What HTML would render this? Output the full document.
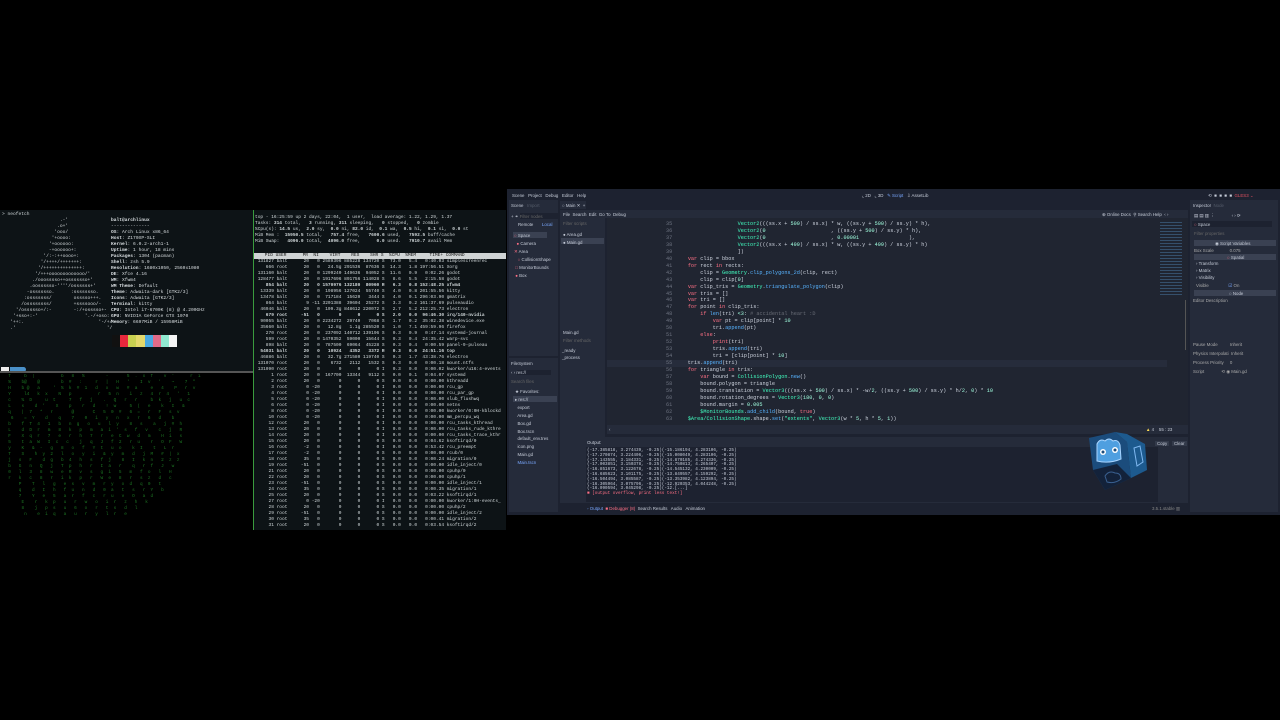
<!DOCTYPE html>
<html><head><meta charset="utf-8"><style>
*{margin:0;padding:0;box-sizing:border-box}
body{width:1280px;height:720px;background:#000;position:relative;overflow:hidden;font-family:"Liberation Sans",sans-serif}
.a{position:absolute}
.m{font-family:"Liberation Mono",monospace;white-space:pre}
.t{font-size:4.6px;line-height:6px;color:#cfd6d8}
.g{color:#2fbf3a}
.gs{font-size:4.4px;color:#c6ccd8;white-space:nowrap}
.code{font-size:5.2px;line-height:6.95px;color:#cdd3de}
.kw{color:#ff7085}.ty{color:#42ffc2}.fn{color:#57b3ff}.nu{color:#a1ffe0}.cm{color:#676b75}.ln{color:#6d7380}
.hb{background:#cfd3d4;color:#111}
.b{font-weight:bold}
</style></head><body>

<!-- left terminal -->
<div class="a" style="left:0;top:210px;width:253px;height:157px;background:#0d1316"></div>
<div class="a m t" style="left:2px;top:212px">&gt; neofetch</div>
<div class="a m t" style="left:2px;top:218px;color:#d8dde0">                     .-'
                    .o+'
                   'ooo/
                  '+oooo:
                 '+oooooo:
                 -+oooooo+:
               '/:-:++oooo+:
              '/++++/+++++++:
             '/++++++++++++++:
            '/+++ooooooooooooo/'
           ./ooosssso++osssssso+'
          .oossssso-''''/ossssss+'
         -osssssso.      :ssssssso.
        :osssssss/        osssso+++.
       /ossssssss/        +ssssooo/-
     '/ossssso+/:-        -:/+osssso+-
    '+sso+:-'                 '.-/+oso:
   '++:.                           '-/+/
   .'                                 '/</div>
<div class="a m t" style="left:111px;top:218px;color:#d8dde0"><b>balt@archlinux</b>
--------------
<b>OS</b>: Arch Linux x86_64
<b>Host</b>: Z170XP-SLI
<b>Kernel</b>: 6.0.2-arch1-1
<b>Uptime</b>: 1 hour, 18 mins
<b>Packages</b>: 1304 (pacman)
<b>Shell</b>: zsh 5.9
<b>Resolution</b>: 1680x1050, 2560x1080
<b>DE</b>: Xfce 4.16
<b>WM</b>: Xfwm4
<b>WM Theme</b>: Default
<b>Theme</b>: Adwaita-dark [GTK2/3]
<b>Icons</b>: Adwaita [GTK2/3]
<b>Terminal</b>: kitty
<b>CPU</b>: Intel i7-6700K (8) @ 4.200GHz
<b>GPU</b>: NVIDIA GeForce GTX 1070
<b>Memory</b>: 6697MiB / 15950MiB</div>
<div class="a" style="left:112px;top:335px;width:65px;height:12px;display:flex">
<div style="flex:1;background:#111"></div><div style="flex:1;background:#e8283c"></div><div style="flex:1;background:#c8d050"></div><div style="flex:1;background:#e4d86a"></div><div style="flex:1;background:#4aa8e0"></div><div style="flex:1;background:#e06a88"></div><div style="flex:1;background:#90e8d0"></div><div style="flex:1;background:#f4f4f4"></div></div>
<div class="a" style="left:0;top:367px;width:253px;height:4px;background:#0d1316"></div>
<div class="a" style="left:1px;top:367px;width:8px;height:5px;background:#eee"></div>
<div class="a" style="left:10px;top:367px;width:16px;height:5px;background:#4a90c8;border-radius:0 3px 3px 0"></div>
<div class="a" style="left:0;top:371px;width:253px;height:2px;background:#555"></div>
<!-- matrix -->
<div class="a m t g" style="left:3px;top:374px;font-size:4.4px;line-height:6px;opacity:.6">  f     b  |          b   8   %        -       5  .  x  f    v  '      r  i
  %    b@    @        b  #   :     r   |   H   '    I  v   '    ~    7  "
  H    b @   a     '  %  k  #  1   d   x   w   #  a     e   4    P   r  v
  Y     l4   k  x    N   p          r   5  n    i   z   4  r  4   '   1
  c    %  D     u  t     7   f   j    .   Q   r   r     b  k   j   u  c
  L    s    d  '    X    p    r   d    !  w     5  (   e    k   I   &amp;
  q    |  7   *   r       @       C   5  0  #   6  =   r   F   s  v
   6    =  Y    d    q    7    0   i   y   n   x   r   6   d    b
  b    f  T  4   1   b   n  g   o   u   l  y    8   s    a   j  #  h
  L    d  D  r   m   8   k   p   m   a  i  '  s   f   v    c   j   R
  F    X  q  r   7   e   r   h   7   r   e  C  w   d   m    H  i   s
  5    t  a  W   I  c   c    j   q   J   f  2   r  u    r   O  F   W
  y    K   &amp;  -   g   8   o   f   Y  t   u  o    k  I    t   L  r
  T    S    h  y  2   l   o   y   i   &amp;  y   m   d   j  M   #  |  x
  j   s   F    d  g   b  4   h   s   f  j    8   I   k  n   2  z  z
  b   G   n   Q   j   T  p   h   r   I  a   r    q   r  f   J   w
  0   l   3   8   w   e  R   v   s   g  i   5   m   f  o   l   H
  r   k   c   8   r   i  k   p   r   W  e   8   r   s  z   d   c
      P    T   l   g   e  s   v   m   r  y   o  d   q  0   t
      q    d   I   h   f  u   n   d   0  a   t   s   r  Y   b
      7    Y   e   5   a  r   f   c   r  u   v   O   a  d
       E    r   k  p   u   r   w   o   i  r   z   h   k
       8    j   p  s   u   6   o   r   t  s   d   l
        n    e  i  q   a   u   r   y   l  r   e</div>
<div class="a" style="left:253px;top:210px;width:1px;height:320px;background:#3a9b3e"></div>

<!-- htop -->
<div class="a" style="left:254px;top:210px;width:252px;height:320px;background:#0d1316"></div>
<div class="a m t" style="left:255px;top:215px;font-size:4.5px">top - 16:25:59 up 2 days, 22:04,  1 user,  load average: 1.22, 1.29, 1.37
Tasks: <b>314</b> total,   <b>3</b> running, <b>311</b> sleeping,   <b>0</b> stopped,   <b>0</b> zombie
%Cpu(s): <b>14.5</b> us,  <b>2.0</b> sy,  <b>0.0</b> ni, <b>82.0</b> id,  <b>0.1</b> wa,  <b>0.5</b> hi,  <b>0.1</b> si,  <b>0.0</b> st
MiB Mem :  <b>15950.5</b> total,   <b>757.4</b> free,   <b>7600.6</b> used,   <b>7592.5</b> buff/cache
MiB Swap:   <b>4096.0</b> total,  <b>4096.0</b> free,      <b>0.0</b> used.   <b>7910.7</b> avail Mem</div>
<div class="a m t hb" style="left:254px;top:253px;width:252px;font-size:4.5px">    PID USER      PR  NI    VIRT    RES    SHR S  %CPU  %MEM     TIME+ COMMAND</div>
<div class="a m t" style="left:255px;top:259px;font-size:4.5px"> 131827 balt      20   0 2589396 885228 134720 S  73.0   5.4   0:40.03 simplescreenrec
    666 root      20   0   24.5g 291536  87636 S  14.3   1.8 197:56.51 Xorg
 131160 balt      20   0 1299240 149636  94052 S  11.6   0.9   0:02.26 godot
 128477 balt      20   0 1917696 891756 114028 S   8.6   5.5   2:15.58 godot
<b>    854 balt      20   0 1570976 132180  80960 R   6.3   0.8 152:48.25 xfwm4</b>
  13339 balt      20   0  198956 127024  55740 S   4.0   0.8 201:55.56 kitty
  13478 balt      20   0  717184  15620   3444 S   4.0   0.1 296:03.90 gmatrix
    864 balt       9 -11 3201388  39604  25272 S   3.3   0.2 161:37.69 pulseaudio
  46946 balt      20   0  109.3g 848612 220072 S   2.7   5.2 212:25.73 electron
<b>    679 root     -51   0       0      0      0 S   2.0   0.0  96:46.30 irq/140-nvidia</b>
  90055 balt      20   0 2234272  29740   7068 S   1.7   0.2  35:02.38 winedevice.exe
  35660 balt      20   0   12.8g   1.1g 285520 S   1.0   7.1 459:59.96 firefox
    270 root      20   0  237092 140712 139196 S   0.3   0.9   0:47.14 systemd-journal
    599 root      20   0 1470352  59000  15644 S   0.3   0.4  24:35.42 warp-svc
    898 balt      20   0  787500  69064  45228 S   0.3   0.4   0:00.59 panel-9-pulseau
<b>  54031 balt      20   0   10924   4352   3372 R   0.3   0.0  24:51.16 top</b>
  46886 balt      20   0   32.7g 271580 119740 S   0.3   1.7  43:38.76 electron
 131070 root      20   0    6732   2112   1532 S   0.3   0.0   0:00.18 mount.ntfs
 131090 root      20   0       0      0      0 I   0.3   0.0   0:00.02 kworker/u16:4-events
      1 root      20   0  167700  13344   9112 S   0.0   0.1   0:04.07 systemd
      2 root      20   0       0      0      0 S   0.0   0.0   0:00.00 kthreadd
      3 root       0 -20       0      0      0 I   0.0   0.0   0:00.00 rcu_gp
      4 root       0 -20       0      0      0 I   0.0   0.0   0:00.00 rcu_par_gp
      5 root       0 -20       0      0      0 I   0.0   0.0   0:00.00 slub_flushwq
      6 root       0 -20       0      0      0 I   0.0   0.0   0:00.00 netns
      8 root       0 -20       0      0      0 I   0.0   0.0   0:00.00 kworker/0:0H-kblockd
     10 root       0 -20       0      0      0 I   0.0   0.0   0:00.00 mm_percpu_wq
     12 root      20   0       0      0      0 I   0.0   0.0   0:00.00 rcu_tasks_kthread
     13 root      20   0       0      0      0 I   0.0   0.0   0:00.00 rcu_tasks_rude_kthre
     14 root      20   0       0      0      0 I   0.0   0.0   0:00.00 rcu_tasks_trace_kthr
     15 root      20   0       0      0      0 S   0.0   0.0   0:04.62 ksoftirqd/0
     16 root      -2   0       0      0      0 I   0.0   0.0   0:53.42 rcu_preempt
     17 root      -2   0       0      0      0 S   0.0   0.0   0:00.00 rcub/0
     18 root      35   0       0      0      0 S   0.0   0.0   0:00.24 migration/0
     19 root     -51   0       0      0      0 S   0.0   0.0   0:00.00 idle_inject/0
     21 root      20   0       0      0      0 S   0.0   0.0   0:00.00 cpuhp/0
     22 root      20   0       0      0      0 S   0.0   0.0   0:00.00 cpuhp/1
     23 root     -51   0       0      0      0 S   0.0   0.0   0:00.00 idle_inject/1
     24 root      35   0       0      0      0 S   0.0   0.0   0:00.35 migration/1
     25 root      20   0       0      0      0 S   0.0   0.0   0:03.22 ksoftirqd/1
     27 root       0 -20       0      0      0 I   0.0   0.0   0:00.00 kworker/1:0H-events_
     28 root      20   0       0      0      0 S   0.0   0.0   0:00.00 cpuhp/2
     29 root     -51   0       0      0      0 S   0.0   0.0   0:00.00 idle_inject/2
     30 root      35   0       0      0      0 S   0.0   0.0   0:00.41 migration/2
     31 root      20   0       0      0      0 S   0.0   0.0   0:03.54 ksoftirqd/2</div>

<!-- Godot -->
<div class="a" style="left:507px;top:189px;width:773px;height:326px;background:#1d2230"></div>
<div class="a gs" style="left:512px;top:193px">Scene&nbsp;&nbsp; Project&nbsp;&nbsp; Debug&nbsp;&nbsp; Editor&nbsp;&nbsp; Help</div>
<div class="a gs" style="left:862px;top:193px">⌞ 2D&nbsp;&nbsp; ⌞ 3D&nbsp;&nbsp; <span style="color:#7aa8ff">✎ Script</span>&nbsp;&nbsp; ⇩ AssetLib</div>
<div class="a gs" style="left:1208px;top:193px">⟲ &nbsp;■ &nbsp;■ &nbsp;■ &nbsp;■ &nbsp;<span style="color:#e05060">GLES3 ⌄</span></div>
<!-- scene dock -->
<div class="a" style="left:509px;top:200px;width:49px;height:156px;background:#252b3a"></div>
<div class="a gs" style="left:511px;top:203px">Scene&nbsp;&nbsp;&nbsp;<span style="color:#555c6a">Import</span></div>
<div class="a" style="left:520px;top:213px;width:38px;height:6px;background:#1d2230"></div>
<div class="a gs" style="left:511px;top:214px">+ ⚭ <span style="color:#666">Filter nodes</span></div>
<div class="a gs" style="left:518px;top:222px">Remote&nbsp;&nbsp;&nbsp;&nbsp;&nbsp;&nbsp;&nbsp;<span style="color:#7aa8ff">Local</span></div>
<div class="a" style="left:513px;top:232px;width:34px;height:6px;background:#3a4152"></div>
<div class="a gs" style="left:514px;top:232px;line-height:7.9px"><span style="color:#ff7085">○</span> Space<br>&nbsp; <span style="color:#ff7085">●</span> Camera<br><span style="color:#ff7085">✕</span> Area<br>&nbsp;&nbsp;&nbsp;<span style="color:#ff7085">○</span> CollisionShape<br>&nbsp;<span style="color:#ff7085">□</span> MonitorBounds<br>&nbsp;<span style="color:#ff7085">●</span> Box</div>
<div class="a gs" style="left:567px;top:232px;line-height:7.9px">✎◉<br>&nbsp;◉<br>✎◉<br>&nbsp;◉<br><span style="color:#ffdd55">▲</span>◉<br>✎◉</div>
<!-- filesystem -->
<div class="a" style="left:509px;top:358px;width:49px;height:154px;background:#252b3a"></div>
<div class="a gs" style="left:511px;top:361px">FileSystem</div>
<div class="a" style="left:517px;top:370px;width:34px;height:5px;background:#1d2230"></div>
<div class="a gs" style="left:511px;top:370px">‹ › res://</div>
<div class="a gs" style="left:511px;top:379px;color:#666">Search files</div>
<div class="a" style="left:513px;top:396px;width:44px;height:6px;background:#3a4152"></div>
<div class="a gs" style="left:515px;top:388px;line-height:7.9px">★ Favorites:<br>▸ res://<br>&nbsp; export<br>&nbsp; Area.gd<br>&nbsp; Box.gd<br>&nbsp; Box.tscn<br>&nbsp; default_env.tres<br>&nbsp; icon.png<br>&nbsp; Main.gd<br>&nbsp; <span style="color:#7aa8ff">Main.tscn</span></div>
<!-- main area -->
<div class="a" style="left:560px;top:200px;width:628px;height:10px;background:#1d2230"></div>
<div class="a" style="left:560px;top:201px;width:26px;height:8px;background:#252b3a"></div>
<div class="a gs" style="left:562px;top:203px">○ Main ✕&nbsp; +</div>
<div class="a" style="left:560px;top:210px;width:628px;height:8px;background:#252b3a"></div>
<div class="a gs" style="left:563px;top:212px">File&nbsp; Search&nbsp; Edit&nbsp; Go To&nbsp; Debug</div>
<div class="a gs" style="left:1102px;top:212px">⊕ Online Docs&nbsp; ⚲ Search Help&nbsp; ‹ ›</div>
<div class="a" style="left:560px;top:218px;width:45px;height:136px;background:#252b3a"></div>
<div class="a gs" style="left:563px;top:221px;color:#666">Filter scripts</div>
<div class="a" style="left:561px;top:238px;width:43px;height:6px;background:#3a4152"></div>
<div class="a gs" style="left:563px;top:231px;line-height:7.5px">● Area.gd<br>● Main.gd</div>
<div class="a" style="left:560px;top:326px;width:45px;height:170px;background:#252b3a"></div>
<div class="a gs" style="left:563px;top:330px">Main.gd</div>
<div class="a gs" style="left:563px;top:338px;color:#666">Filter methods</div>
<div class="a gs" style="left:562px;top:347px;line-height:7.2px">_ready<br>_process</div>
<!-- code -->
<div class="a" style="left:607px;top:218px;width:581px;height:207px;background:#202531"></div>
<div class="a" style="left:607px;top:360px;width:560px;height:7px;background:#262c3b"></div>
<div class="a m code" style="left:666px;top:221px"><span class="ln">35</span>                     <span class="ty">Vector2</span>(((ss.x + <span class="nu">500</span>) / ss.x) * w, ((ss.y + <span class="nu">500</span>) / ss.y) * h),
<span class="ln">36</span>                     <span class="ty">Vector2</span>(<span class="nu">0</span>                     , ((ss.y + <span class="nu">500</span>) / ss.y) * h),
<span class="ln">37</span>                     <span class="ty">Vector2</span>(<span class="nu">0</span>                     , <span class="nu">0.00001</span>                ),
<span class="ln">38</span>                     <span class="ty">Vector2</span>(((ss.x + <span class="nu">499</span>) / ss.x) * w, ((ss.y + <span class="nu">499</span>) / ss.y) * h)
<span class="ln">39</span>                     ])
<span class="ln">40</span>     <span class="kw">var</span> clip = bbox
<span class="ln">41</span>     <span class="kw">for</span> rect <span class="kw">in</span> rects:
<span class="ln">42</span>         clip = <span class="ty">Geometry</span>.<span class="fn">clip_polygons_2d</span>(clip, rect)
<span class="ln">43</span>         clip = clip[<span class="nu">0</span>]
<span class="ln">44</span>     <span class="kw">var</span> clip_tris = <span class="ty">Geometry</span>.<span class="fn">triangulate_polygon</span>(clip)
<span class="ln">45</span>     <span class="kw">var</span> tris = []
<span class="ln">46</span>     <span class="kw">var</span> tri = []
<span class="ln">47</span>     <span class="kw">for</span> point <span class="kw">in</span> clip_tris:
<span class="ln">48</span>         <span class="kw">if</span> <span class="fn">len</span>(tri) <span class="nu">&lt;3</span>: <span class="cm"># accidental heart :D</span>
<span class="ln">49</span>             <span class="kw">var</span> pt = clip[point] * <span class="nu">10</span>
<span class="ln">50</span>             tri.<span class="fn">append</span>(pt)
<span class="ln">51</span>         <span class="kw">else</span>:
<span class="ln">52</span>             <span class="kw">print</span>(tri)
<span class="ln">53</span>             tris.<span class="fn">append</span>(tri)
<span class="ln">54</span>             tri = [clip[point] * <span class="nu">10</span>]
<span class="ln">55</span>     tris.<span class="fn">append</span>(tri)
<span class="ln">56</span>     <span class="kw">for</span> triangle <span class="kw">in</span> tris:
<span class="ln">57</span>         <span class="kw">var</span> bound = <span class="ty">CollisionPolygon</span>.<span class="fn">new</span>()
<span class="ln">58</span>         bound.polygon = triangle
<span class="ln">59</span>         bound.translation = <span class="ty">Vector3</span>(((ss.x + <span class="nu">500</span>) / ss.x) * -w/<span class="nu">2</span>, ((ss.y + <span class="nu">500</span>) / ss.y) * h/<span class="nu">2</span>, <span class="nu">0</span>) * <span class="nu">10</span>
<span class="ln">60</span>         bound.rotation_degrees = <span class="ty">Vector3</span>(<span class="nu">180</span>, <span class="nu">0</span>, <span class="nu">0</span>)
<span class="ln">61</span>         bound.margin = <span class="nu">0.005</span>
<span class="ln">62</span>         <span class="ty">$MonitorBounds</span>.<span class="fn">add_child</span>(bound, <span class="kw">true</span>)
<span class="ln">63</span>     <span class="ty">$Area/CollisionShape</span>.shape.<span class="fn">set</span>(<span class="ty">"extents"</span>, <span class="ty">Vector3</span>(w * <span class="nu">5</span>, h * <span class="nu">5</span>, <span class="nu">1</span>))</div>
<div class="a" style="left:1160px;top:222px;width:22px;height:75px;background:repeating-linear-gradient(#3a5a7a 0 1px,#202531 1px 3px);opacity:.8"></div>
<div class="a" style="left:1185px;top:300px;width:1px;height:50px;background:#555"></div>
<div class="a" style="left:607px;top:425px;width:581px;height:9px;background:#252b3a"></div>
<div class="a gs" style="left:609px;top:427px">‹</div>
<div class="a gs" style="left:1146px;top:427px"><span style="color:#ffdd55">▲</span> 4&nbsp;&nbsp;&nbsp; 55 : 23</div>
<!-- output -->
<div class="a" style="left:560px;top:437px;width:628px;height:66px;background:#252b3a"></div>
<div class="a gs" style="left:587px;top:440px">Output:</div>
<div class="a" style="left:586px;top:447px;width:572px;height:55px;background:#1d2230"></div>
<div class="a m" style="left:587px;top:449px;font-size:4.3px;line-height:4.8px;color:#c6ccd8">(-17.385818, 3.274439, -0.25)(-15.186194, 4.283106, -0.25)
(-17.270874, 3.224406, -0.25)(-15.008049, 4.283106, -0.25)
(-17.143555, 3.184331, -0.25)(-14.870185, 4.274336, -0.25)
(-17.003851, 3.150378, -0.25)(-14.750813, 4.265407, -0.25)
(-16.851673, 3.122678, -0.25)(-14.545132, 4.230009, -0.25)
(-16.685623, 3.101175, -0.25)(-13.849557, 4.159292, -0.25)
(-16.504494, 3.085587, -0.25)(-13.353982, 4.123894, -0.25)
(-16.305964, 3.075796, -0.25)(-12.920353, 4.044248, -0.25)
(-16.090594, 3.045298, -0.25)(-12.[...]
<span style="color:#ff7085">■ [output overflow, print less text!]</span></div>
<div class="a gs" style="left:1155px;top:441px;background:#333a4a;padding:0 2px">Copy</div>
<div class="a gs" style="left:1172px;top:441px;background:#333a4a;padding:0 2px">Clear</div>
<div class="a gs" style="left:587px;top:506px"><span style="color:#7aa8ff">◦ Output</span>&nbsp; <span style="color:#ff7085">■ Debugger (8)</span>&nbsp; Search Results&nbsp;&nbsp; Audio&nbsp;&nbsp; Animation</div>
<div class="a gs" style="left:1152px;top:506px;color:#888">3.5.1.stable ▥</div>
<!-- godot cube -->
<svg class="a" style="left:1087px;top:430px" width="66" height="72" viewBox="0 0 66 72">
<polygon points="2,8 28,2 40,12 44,48 18,60 6,40" fill="#1b4c7c"/>
<polygon points="28,2 40,12 44,48 60,40 58,14 40,4" fill="#1d5a8e"/>
<polygon points="6,40 18,60 44,48 30,34" fill="#13223a"/>
<path d="M10,14 q3,-6 8,-3 q4,-4 8,0 q5,-2 7,4 l1,14 q-12,5 -24,2 z" fill="#4f9fe0" stroke="#a8d4ff" stroke-width="1"/>
<circle cx="16" cy="22" r="3" fill="#fff"/><circle cx="28" cy="20" r="3" fill="#fff"/>
<circle cx="16" cy="22" r="1.5" fill="#1b4c7c"/><circle cx="28" cy="20" r="1.5" fill="#1b4c7c"/>
<path d="M47,18 l6,-2 l3,16 l-6,4 z" fill="none" stroke="#7fb8f0" stroke-width="1"/>
<path d="M18,46 q4,-6 10,-3 q6,0 6,6 q-6,5 -14,3 z" fill="none" stroke="#3a6090" stroke-width="1"/>
</svg>
<!-- inspector -->
<div class="a" style="left:1190px;top:200px;width:88px;height:312px;background:#252b3a"></div>
<div class="a gs" style="left:1193px;top:203px">Inspector&nbsp;&nbsp;<span style="color:#555c6a">Node</span></div>
<div class="a gs" style="left:1194px;top:213px">▤ ▤ ▥ ⋮&nbsp;&nbsp;&nbsp;&nbsp;&nbsp;&nbsp;&nbsp;&nbsp;&nbsp;&nbsp;&nbsp;&nbsp;&nbsp;&nbsp;‹ › ⟳</div>
<div class="a" style="left:1192px;top:221px;width:80px;height:6px;background:#1d2230"></div>
<div class="a gs" style="left:1194px;top:222px"><span style="color:#ff7085">○</span> Space</div>
<div class="a gs" style="left:1194px;top:231px;color:#666">Filter properties</div>
<div class="a" style="left:1194px;top:240px;width:82px;height:6px;background:#3a4152"></div>
<div class="a gs" style="left:1215px;top:241px">◉ Script Variables</div>
<div class="a gs" style="left:1194px;top:248px;color:#aaa">Box Scale&nbsp;&nbsp;&nbsp;&nbsp;&nbsp;&nbsp;&nbsp;&nbsp;&nbsp;&nbsp;&nbsp;&nbsp;&nbsp;0.075</div>
<div class="a" style="left:1194px;top:254px;width:82px;height:6px;background:#3a4152"></div>
<div class="a gs" style="left:1227px;top:255px"><span style="color:#ff7085">○</span> Spatial</div>
<div class="a gs" style="left:1196px;top:261px;line-height:6.8px">› Transform<br>› Matrix<br>› Visibility</div>
<div class="a gs" style="left:1196px;top:283px;color:#aaa">Visible&nbsp;&nbsp;&nbsp;&nbsp;&nbsp;&nbsp;&nbsp;&nbsp;&nbsp;&nbsp;&nbsp;&nbsp;&nbsp;&nbsp;&nbsp;&nbsp;<span style="color:#7aa8ff">☑</span> On</div>
<div class="a" style="left:1194px;top:290px;width:82px;height:6px;background:#3a4152"></div>
<div class="a gs" style="left:1229px;top:291px">○ Node</div>
<div class="a gs" style="left:1193px;top:298px;color:#aaa">Editor Description</div>
<div class="a gs" style="left:1193px;top:340px;line-height:9px;color:#aaa">Pause Mode&nbsp;&nbsp;&nbsp;&nbsp;&nbsp;&nbsp;&nbsp;&nbsp;&nbsp;&nbsp;Inherit<br>Physics Interpolati&nbsp;&nbsp;Inherit<br>Process Priority&nbsp;&nbsp;&nbsp;&nbsp;&nbsp;0<br>Script&nbsp;&nbsp;&nbsp;&nbsp;&nbsp;&nbsp;&nbsp;&nbsp;&nbsp;&nbsp;&nbsp;&nbsp;&nbsp;&nbsp;⟲ ◉ Main.gd</div>
</body></html>
